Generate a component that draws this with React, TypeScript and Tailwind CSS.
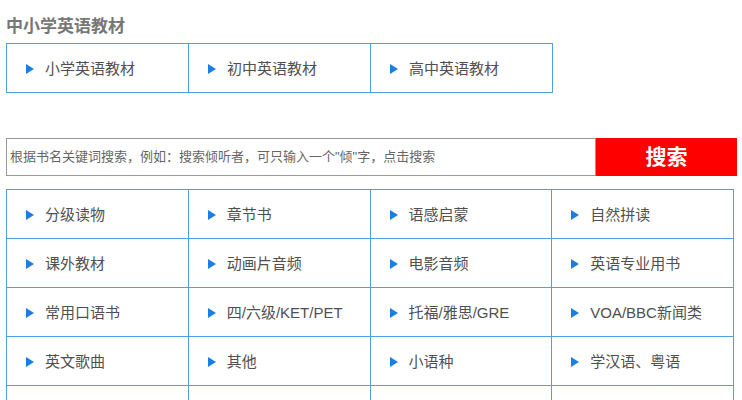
const topItems = ['小学英语教材', '初中英语教材', '高中英语教材'];

const categories = [
  '分级读物',
  '章节书',
  '语感启蒙',
  '自然拼读',
  '课外教材',
  '动画片音频',
  '电影音频',
  '英语专业用书',
  '常用口语书',
  '四/六级/KET/PET',
  '托福/雅思/GRE',
  'VOA/BBC新闻类',
  '英文歌曲',
  '其他',
  '小语种',
  '学汉语、粤语',
  '',
  '',
  '',
  '',
];

function Arrow() {
  return (
    <svg width="8" height="10" viewBox="0 0 8 10" className="shrink-0">
      <path d="M0 0 L8 5 L0 10 Z" fill="#1b7ee3" />
    </svg>
  );
}

function Cell({ label }: { label: string }) {
  return (
    <div className="flex h-[49px] items-center gap-[11px] border-b border-r border-[#4f9fe3] pl-[19px] pt-[2px]">
      {label && (
        <>
          <Arrow />
          <span className="text-[15px] text-[#505050]">{label}</span>
        </>
      )}
    </div>
  );
}

export default function App() {
  return (
    <div
      className="h-[400px] w-[742px] overflow-hidden bg-white px-[6px] pt-[16px]"
      style={{ fontFamily: '"Liberation Sans", "Noto Sans CJK SC", sans-serif' }}
    >
      <h2 className="text-[17px] font-bold leading-[22px] text-[#777]">
        中小学英语教材
      </h2>

      <div className="mt-[5px] grid w-[547px] grid-cols-3 border-l border-t border-[#4f9fe3]">
        {topItems.map((item) => (
          <Cell key={item} label={item} />
        ))}
      </div>

      <div className="mt-[45px] flex h-[38px] w-[731px]">
        <div className="flex flex-1 items-center border border-[#999] pl-[3px] text-[13px] text-[#666]">
          根据书名关键词搜索，例如：搜索倾听者，可只输入一个"倾"字，点击搜索
        </div>
        <button
          type="button"
          className="w-[141px] bg-[#ff0000] text-[21px] font-bold text-white"
        >
          搜索
        </button>
      </div>

      <div className="mt-[13px] grid w-[728px] grid-cols-4 border-l border-t border-[#4f9fe3]">
        {categories.map((item, index) => (
          <Cell key={index} label={item} />
        ))}
      </div>
    </div>
  );
}
